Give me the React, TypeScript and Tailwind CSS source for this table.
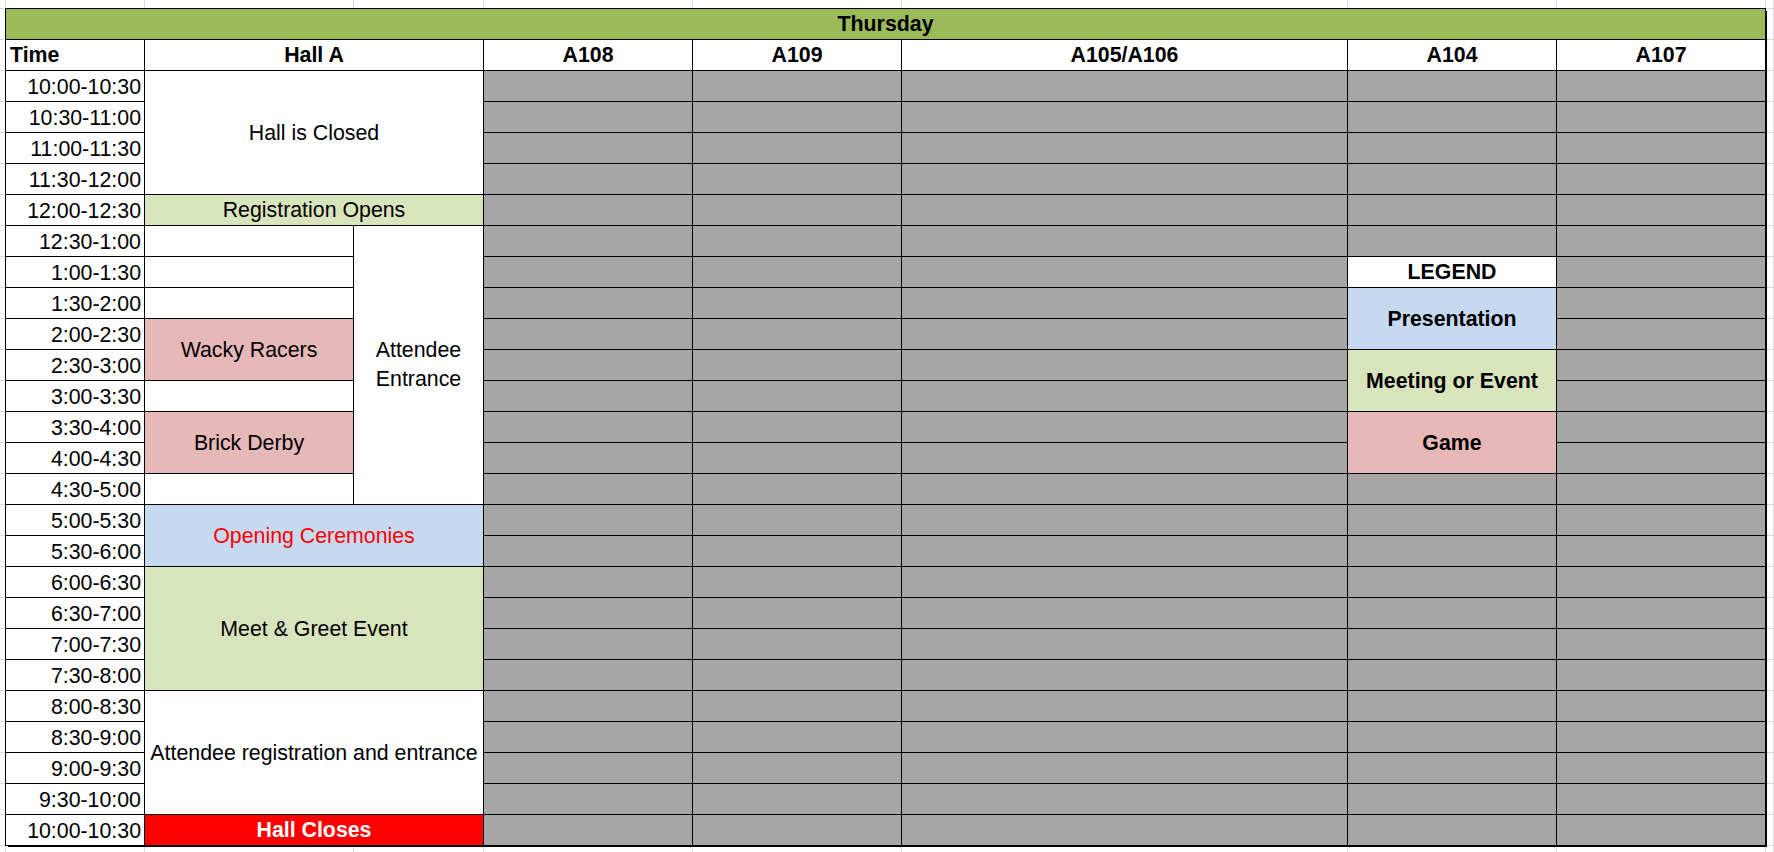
const times = [
  "10:00-10:30",
  "10:30-11:00",
  "11:00-11:30",
  "11:30-12:00",
  "12:00-12:30",
  "12:30-1:00",
  "1:00-1:30",
  "1:30-2:00",
  "2:00-2:30",
  "2:30-3:00",
  "3:00-3:30",
  "3:30-4:00",
  "4:00-4:30",
  "4:30-5:00",
  "5:00-5:30",
  "5:30-6:00",
  "6:00-6:30",
  "6:30-7:00",
  "7:00-7:30",
  "7:30-8:00",
  "8:00-8:30",
  "8:30-9:00",
  "9:00-9:30",
  "9:30-10:00",
  "10:00-10:30",
];

// slots where the left half of Hall A is an empty white cell
const emptyHallSlots = [5, 6, 7, 10, 13];
// slots covered by the legend in the A104 column
const legendSlots = [6, 7, 8, 9, 10, 11, 12];

const rooms = ["A108", "A109", "A105/A106", "A104", "A107"];

const Cell = ({ className = "", children }: { className?: string; children?: React.ReactNode }) => (
  <div className={`flex items-center justify-center text-center ${className}`}>{children}</div>
);

const Schedule = () => {
  return (
    <div className="col-start-2 col-end-10 row-start-2 row-end-29 grid grid-cols-[138px_208px_129px_208px_208px_445px_208px_208px] grid-rows-[repeat(27,30px)] gap-px bg-black outline outline-black shadow-[2px_2px_0_0_black]">
      {/* day banner */}
      <Cell className="col-start-1 col-span-8 row-start-1 bg-[#9bbb59] font-bold">Thursday</Cell>

      {/* column headers */}
      <div className="flex items-center bg-white pl-1 font-bold">Time</div>
      <Cell className="col-span-2 bg-white font-bold">Hall A</Cell>
      {rooms.map((r) => (
        <Cell key={r} className="bg-white font-bold">
          {r}
        </Cell>
      ))}

      {/* Hall A blocks */}
      <Cell className="col-start-2 col-span-2 row-start-3 row-span-4 bg-white">Hall is Closed</Cell>
      <Cell className="col-start-2 col-span-2 row-start-7 bg-[#d8e4bc]">Registration Opens</Cell>
      <Cell className="col-start-3 row-start-8 row-span-9 bg-white leading-[29px]">Attendee Entrance</Cell>
      <Cell className="col-start-2 row-start-11 row-span-2 bg-[#e6b8b7]">Wacky Racers</Cell>
      <Cell className="col-start-2 row-start-14 row-span-2 bg-[#e6b8b7]">Brick Derby</Cell>
      <Cell className="col-start-2 col-span-2 row-start-17 row-span-2 bg-[#c5d9f1] text-[#ff0000]">Opening Ceremonies</Cell>
      <Cell className="col-start-2 col-span-2 row-start-19 row-span-4 bg-[#d8e4bc]">Meet &amp; Greet Event</Cell>
      <Cell className="col-start-2 col-span-2 row-start-23 row-span-4 bg-white">Attendee registration and entrance</Cell>
      <Cell className="col-start-2 col-span-2 row-start-27 bg-[#ff0000] font-bold text-white">Hall Closes</Cell>

      {/* legend */}
      <Cell className="col-start-7 row-start-9 bg-white font-bold">LEGEND</Cell>
      <Cell className="col-start-7 row-start-10 row-span-2 bg-[#c5d9f1] font-bold">Presentation</Cell>
      <Cell className="col-start-7 row-start-12 row-span-2 bg-[#d8e4bc] font-bold">Meeting or Event</Cell>
      <Cell className="col-start-7 row-start-14 row-span-2 bg-[#e6b8b7] font-bold">Game</Cell>

      {/* time slots, everything else fills in by auto placement */}
      {times.map((t, i) => {
        const grays = legendSlots.includes(i) ? 4 : 5;
        return [
          <div key={`t${i}`} className="flex items-center justify-end bg-white pr-[3px] pt-px">
            {t}
          </div>,
          emptyHallSlots.includes(i) ? <div key={`e${i}`} className="bg-white" /> : null,
          ...Array.from({ length: grays }, (_, g) => <div key={`g${i}-${g}`} className="bg-[#a6a6a6]" />),
        ];
      })}
    </div>
  );
};

export default function App() {
  // sheet gridlines around the table: 29 rows x 11 cols minus the 27 x 8 table block
  const blanks = Array.from({ length: 29 * 11 - 27 * 8 });
  return (
    <div className="grid h-[852px] w-[1774px] grid-cols-[5px_138px_208px_129px_208px_208px_445px_208px_208px_7px_1fr] grid-rows-[8px_repeat(27,30px)_1fr] gap-px overflow-hidden bg-[#dadada] font-['Liberation_Sans',Arial,sans-serif] text-[21.33px] leading-[30px] text-black">
      {blanks.map((_, i) => (
        <div key={i} className="bg-white" />
      ))}
      <Schedule />
    </div>
  );
}
